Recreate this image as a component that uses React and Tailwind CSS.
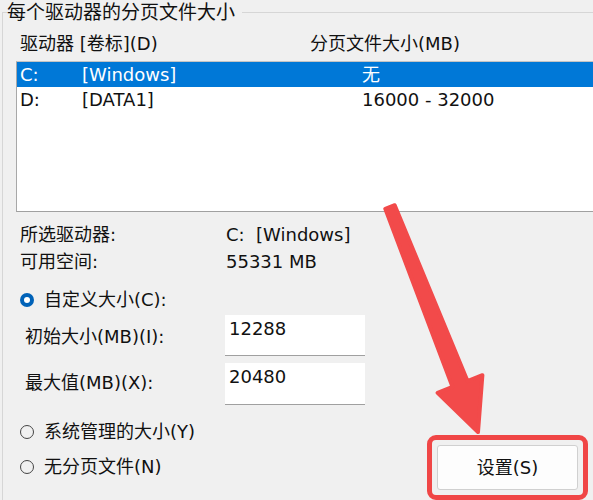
import React from "react";

const font = { fontFamily: '"DejaVu Sans", "Noto Sans CJK SC", sans-serif' };

function Radio({ checked, label }) {
    return (
        <div className="flex h-[24px] items-center pl-[4px] leading-[24px]">
            {checked ? (
                <span className="flex h-[14px] w-[14px] items-center justify-center rounded-full bg-[#0062b8]">
                    <span className="h-[6px] w-[6px] rounded-full bg-white" />
                </span>
            ) : (
                <span className="h-[14px] w-[14px] rounded-full border border-[#444444]" />
            )}
            <span className="ml-[10px]">{label}</span>
        </div>
    );
}

export default function App() {
    return (
        <div className="relative h-[500px] w-[593px] overflow-hidden bg-[#f0f0f0] text-[18px] text-[#111111]" style={font}>
            <fieldset className="ml-[2px] h-[520px] min-w-0 border-l border-t border-[#d6d6d6]">
                <legend className="ml-[4px] pr-[7px] text-[19px] leading-[24px]">每个驱动器的分页文件大小</legend>
                <div className="pl-[13px]">
                    {/* column headers */}
                    <div className="mt-[8px] grid grid-cols-[290px_1fr] pl-[4px] leading-[24px]">
                        <span>驱动器 [卷标](D)</span>
                        <span>分页文件大小(MB)</span>
                    </div>

                    {/* drive list */}
                    <div className="mt-[5px] h-[151px] w-[600px] border border-r-0 border-t-[#c4c4c4] border-l-[#a8a8a8] border-b-[#a0a0a0] bg-white">
                        <div className="grid h-[25px] grid-cols-[62px_280px_1fr] items-center bg-[#0078d7] pl-[3px] leading-[24px] text-white">
                            <span>C:</span>
                            <span>[Windows]</span>
                            <span>无</span>
                        </div>
                        <div className="grid h-[25px] grid-cols-[62px_280px_1fr] items-center pl-[3px] leading-[24px]">
                            <span>D:</span>
                            <span>[DATA1]</span>
                            <span>16000 - 32000</span>
                        </div>
                    </div>

                    {/* selected drive info */}
                    <div className="mt-[11px] flex flex-col gap-[3px] pl-[4px] leading-[24px]">
                        <div className="flex">
                            <span className="w-[206px]">所选驱动器:</span>
                            <span>C:&nbsp;&nbsp;[Windows]</span>
                        </div>
                        <div className="flex">
                            <span className="w-[206px]">可用空间:</span>
                            <span>55331 MB</span>
                        </div>
                    </div>

                    <div className="mt-[14px]">
                        <Radio checked label="自定义大小(C):" />
                    </div>

                    <div className="mt-[3px] flex items-start pl-[9px]">
                        <span className="mt-[10px] w-[200px] leading-[24px]">初始大小(MB)(I):</span>
                        <div className="h-[41px] w-[140px] border-b border-[#a0a0a0] bg-white pl-[4px] pt-[2px] leading-[24px]">12288</div>
                    </div>
                    <div className="mt-[7px] flex items-start pl-[9px]">
                        <span className="mt-[8px] w-[200px] leading-[24px]">最大值(MB)(X):</span>
                        <div className="h-[42px] w-[140px] border-b border-[#a0a0a0] bg-white pl-[4px] pt-[2px] leading-[24px]">20480</div>
                    </div>

                    <div className="flex items-start">
                        <div className="mt-[15px] flex flex-col gap-[11px]">
                            <Radio label="系统管理的大小(Y)" />
                            <Radio label="无分页文件(N)" />
                        </div>
                        <div className="ml-auto mr-[5px] mt-[30px] rounded-[9px] border-[5px] border-[#f04646] p-[5px]">
                            <button className="flex h-[45px] w-[141px] items-center justify-center rounded-[3px] border border-[#d0d0d0] bg-[#fdfdfd] leading-[24px]">
                                设置(S)
                            </button>
                        </div>
                    </div>
                </div>
            </fieldset>

            {/* annotation arrow */}
            <svg className="pointer-events-none absolute inset-0" width="593" height="500" viewBox="0 0 593 500">
                <polygon
                    points="394.7,205.2 467.5,381.1 482.4,375.2 478,432 437.6,392.8 452.5,386.9 385.3,208.8"
                    fill="#f24a4a"
                    stroke="#f24a4a"
                    strokeWidth="4"
                    strokeLinejoin="round"
                />
            </svg>
        </div>
    );
}
